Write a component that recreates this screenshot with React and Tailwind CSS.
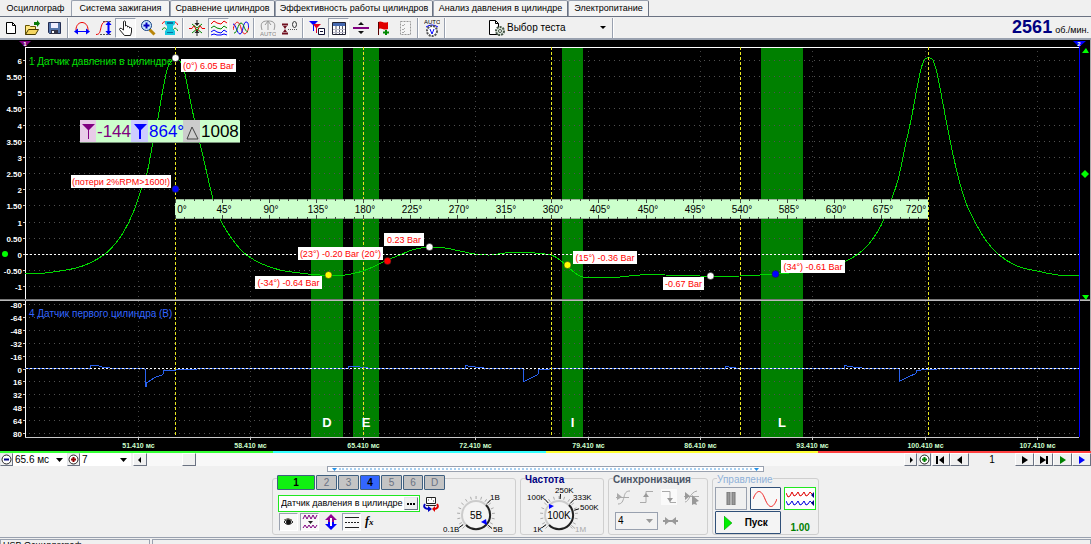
import React from 'react';
import clsx from 'clsx';

const tabs = [
  { label: 'Осциллограф', width: 'w-[71px]' },
  { label: 'Система зажигания', width: 'w-[99px]' },
  { label: 'Сравнение цилиндров', width: 'w-[105px]' },
  { label: 'Эффективность работы цилиндров', width: 'w-[158px]' },
  { label: 'Анализ давления в цилиндре', width: 'w-[135px]' },
  { label: 'Электропитание', width: 'w-[81px]' },
];

const pressure = [
  [25, 274], [45, 273], [60, 271], [76, 268], [90, 263], [105, 254], [115, 244], [123, 233], [133, 213],
  [140, 193], [147, 173], [153, 142], [158, 118], [163, 89], [167, 70], [171, 61], [175, 58], [180, 61],
  [184, 70], [188, 89], [194, 118], [202, 152], [213, 199], [220, 219], [230, 236], [240, 249], [248, 256],
  [262, 264], [280, 270], [300, 273], [320, 275], [345, 275], [355, 273], [363, 271], [375, 266], [387, 260],
  [400, 255], [412, 250], [429, 247], [445, 248], [460, 251], [475, 254], [490, 255], [505, 253], [520, 252],
  [535, 253], [551, 255], [560, 260], [567, 266], [575, 273], [583, 277], [600, 278], [620, 277], [640, 275],
  [665, 275], [700, 276], [740, 276], [775, 274], [800, 272], [825, 268], [846, 261], [858, 254], [868, 245],
  [878, 231], [884, 219], [890, 203], [898, 180], [905, 147], [911, 120], [917, 88], [921, 69], [925, 59],
  [932, 59], [936, 69], [940, 88], [946, 120], [952, 150], [959, 180], [966, 203], [975, 222], [985, 239],
  [998, 254], [1017, 266], [1037, 271], [1058, 275], [1079, 276],
];

const firstCylinder =
  '25,368 90,368 91,365 97,365 104,367 116,368 145,368 146,386 147,382 155,377 163,374 164,370 172,370 180,369 215,368 348,368 348,366 356,366 364,367 372,368 465,368 465,365 478,367 490,368 523,368 524,381 532,377 538,374 539,369 560,368 725,368 725,366 740,368 844,368 844,365 856,367 868,368 899,368 899,381 907,377 916,373 917,370 925,369 950,368 1079,368';

const upperTicks = ['6', '5.50', '5', '4.50', '4', '3.50', '3', '2.50', '2', '1.50', '1', '0.50', '0', '-0.50', '-1'];
const lowerTicks = ['-80', '-64', '-48', '-32', '-16', '0', '16', '32', '48', '64', '80'];
const times = [51, 58, 65, 72, 79, 86, 93, 100, 107];

const bands = [
  { x: 311, w: 32, name: 'D' },
  { x: 353, w: 26, name: 'E' },
  { x: 562, w: 21, name: 'I' },
  { x: 761, w: 42, name: 'L' },
];

const markers = [
  { x: 181, y: 59, w: 55, text: '(0°) 6.05 Bar', cx: 175, cy: 58, fill: '#fff' },
  { x: 71, y: 175, w: 100, text: '(потери 2%RPM>1600!)', cx: 175, cy: 189, fill: '#00f' },
  { x: 255, y: 276, w: 67, text: '(-34°) -0.64 Bar', cx: 328, cy: 275, fill: '#ff0' },
  { x: 298, y: 247, w: 85, text: '(23°) -0.20 Bar (20°)', cx: 387, cy: 261, fill: '#f00' },
  { x: 384, y: 233, w: 40, text: '0.23 Bar', cx: 429, cy: 247, fill: '#fff' },
  { x: 573, y: 251, w: 64, text: '(15°) -0.36 Bar', cx: 567, cy: 265, fill: '#ff0' },
  { x: 663, y: 277, w: 41, text: '-0.67 Bar', cx: 710, cy: 276, fill: '#fff' },
  { x: 781, y: 260, w: 64, text: '(34°) -0.61 Bar', cx: 775, cy: 274, fill: '#00f' },
];

// Catmull-Rom spline through the samples
function smooth(pts) {
  let d = `M${pts[0][0]},${pts[0][1]}`;
  for (let i = 0; i < pts.length - 1; i++) {
    const a = pts[i - 1] || pts[i];
    const b = pts[i];
    const c = pts[i + 1];
    const e = pts[i + 2] || c;
    d += `C${b[0] + (c[0] - a[0]) / 6},${b[1] + (c[1] - a[1]) / 6} ${c[0] - (e[0] - b[0]) / 6},${c[1] - (e[1] - b[1]) / 6} ${c[0]},${c[1]}`;
  }
  return d;
}

function Icon({ children, w = 16, h = 16, className }) {
  return (
    <svg width={w} height={h} viewBox={`0 0 ${w} ${h}`} fill="none" className={clsx('shrink-0', className)} aria-hidden="true">
      {children}
    </svg>
  );
}

function Tool({ label, pressed, children }) {
  return (
    <button
      type="button"
      aria-label={label}
      className={clsx(
        'flex h-[20px] w-[21px] items-center justify-center',
        pressed && 'border border-t-gray-400 border-l-gray-400 border-r-white border-b-white bg-[#f8f8f8]'
      )}
    >
      <Icon>{children}</Icon>
    </button>
  );
}

function Separator() {
  return <div className="mx-[2px] h-[20px] w-[2px] border-l border-gray-400 bg-white" />;
}

function Tabs() {
  return (
    <div role="tablist" className="flex h-[17px] shrink-0 border-b border-gray-500">
      {tabs.map((tab, i) => (
        <button
          key={tab.label}
          type="button"
          role="tab"
          aria-selected={i === 0}
          className={clsx(
            'h-[16px] shrink-0 text-center text-[9px] leading-[15px] whitespace-nowrap',
            tab.width,
            i > 0 && 'rounded-t-[2px] border border-b-0 border-gray-400 border-r-gray-500 bg-[#f4f4f4]'
          )}
        >
          {tab.label}
        </button>
      ))}
    </div>
  );
}

function Toolbar() {
  return (
    <div className="flex h-[23px] shrink-0 items-center border-b-2 border-gray-400">
      <div className="flex gap-px">
        <Tool label="Новый">
          <path d="M3.500 2.500h6l3 3v8h-9z" fill="#fff" stroke="#000" />
          <path d="M9.500 2.500v3h3" stroke="#000" />
        </Tool>
        <Tool label="Открыть">
          <path d="M.5 14.500v-9h4l1 1h5v3" fill="#ffe680" stroke="#665500" />
          <path d="M.5 14.500l3-5h10l-3 5z" fill="#f5d660" stroke="#443800" />
          <path d="M9 5V2h3V0l3 3.500L12 7V5z" fill="#087a08" />
        </Tool>
        <Tool label="Сохранить">
          <path d="M1.500 2.500h12v11h-11l-1-1z" fill="#5575aa" stroke="#222c50" />
          <path d="M4 3h7v5H4z" fill="#eef" />
          <path d="M4 10h7v4H4z" fill="#334" />
          <path d="M5 11h2v2H5z" fill="#fff" />
        </Tool>
      </div>
      <Separator />
      <div className="flex gap-px">
        <Tool label="Период">
          <path d="M2 10C2 0 14 0 14 10" stroke="#e00" />
          <path d="M2 11.500h12" stroke="#00f" />
          <path d="M0 11.500l4-3v6zM16 11.500l-4-3v6z" fill="#00f" />
        </Tool>
        <Tool label="Амплитуда">
          <path d="M0 14.500c4 0 4-3 5-7s2-6 6-6h1" stroke="#e00" />
          <path d="M7 1.500h9M4 14.500h12" stroke="#555" strokeDasharray="2 1" />
          <path d="M12.500 3v10" stroke="#00f" strokeWidth="2" />
          <path d="M12.500 1l3 4h-6zM12.500 15l3-4h-6z" fill="#00f" />
        </Tool>
        <Tool label="Перемещение" pressed>
          <path
            d="M5.500 10V1.500q1-1 2 0V6q1-1 2 0v1q1-1 2 0v1q1-1 2 0v4l-1 3.500h-6L1.500 9.500q0-2 2-1z"
            fill="#fff"
            stroke="#222"
          />
        </Tool>
        <Tool label="Масштаб">
          <path d="M9.500 9.500l5 5" stroke="#b8860b" strokeWidth="3" />
          <circle cx="6.500" cy="5.500" r="5" fill="#cceaff" stroke="#123c80" />
          <path d="M3.500 5.500h6M6.500 2.500v6" stroke="#0000c0" strokeWidth="2" />
        </Tool>
        <Tool label="Фильтр">
          <path d="M0 4c2-3 3-3 5 0s4 3 6 0 3-2 5 1" stroke="#e00" />
          <path d="M0 10c2-3 3-3 5 0s4 3 6 0 3-2 5 1" stroke="#080" />
          <path d="M3 1h10v3l-2 2v3l2 2v4H3v-4l2-2V6L3 4z" fill="#18c8e0" />
          <path d="M5 2h6v2H5zM5 12h6v1H5z" fill="#0870a0" />
        </Tool>
      </div>
      <Separator />
      <div className="flex gap-px">
        <Tool label="Центрировать">
          <path d="M0 8.500h3l2-3 3 6 3-6 2 3h3" stroke="#e00" />
          <path d="M3 4l5 4 5-4M3 13l5-4 5 4" stroke="#080" />
          <path d="M8 0v5M8 11v5" stroke="#222" />
          <path d="M8 6L5.500 3h5zM8 10l-2.500 3h5z" fill="#222" />
        </Tool>
        <Tool label="Разделить сигналы" pressed>
          <path d="M0 4l3-3 3 2 4 1 3-3 3 2" stroke="#e00" />
          <path d="M0 8l3-2 3 2 4 1 3-3 3 2" stroke="#080" />
          <path d="M0 12l3-2 3 2 4 1 3-3 3 2M0 15l3-1 3 1h4l3-1 3 1" stroke="#00f" />
        </Tool>
        <Tool label="Наложить сигналы">
          <path d="M0 10C2 0 6 0 8 8s6 8 8-2" stroke="#e00" />
          <path d="M0 4c3 0 4 10 7 10s3-12 6-12 2 4 3 6" stroke="#00f" />
          <path d="M1 13C4 14 5 3 8 3s3 8 7 9" stroke="#080" />
        </Tool>
      </div>
      <Separator />
      <div className="flex gap-px">
        <Tool label="Авто">
          <path d="M2 10C-1 1 5 1 8 1s9 0 6 9M8 1v9M5 5l3-4 3 4" stroke="#999" />
          <text x="0" y="16" fontSize="6" fill="#888">AUTO</text>
        </Tool>
        <Tool label="Установить ноль">
          <path d="M0 4.500h6M0 13.500h6" stroke="#701020" strokeWidth="2" />
          <path d="M1 6h4L3 9zM1 12h4l-2-3z" fill="#701020" />
          <path d="M6 9.500h10" stroke="#555" strokeDasharray="1 1" />
          <ellipse cx="12.500" cy="4.500" rx="2" ry="3" stroke="#333" />
        </Tool>
      </div>
      <Separator />
      <div className="flex gap-px">
        <Tool label="Маркеры">
          <path d="M0 1h9L5 5v6H4V5z" fill="#00f" />
          <path d="M4 4h8L8 8v5H7V8z" fill="#e00020" />
          <path d="M9.500 8.500h6v6h-6zM11 11.500h3" fill="#fff" stroke="#113" />
        </Tool>
        <Tool label="Таблица" pressed>
          <path d="M1.500 2.500h13v12h-13z" fill="#fff" stroke="#223" />
          <path d="M2 3h12v3H2z" fill="#4568b0" />
          <path d="M5 6v8M8.500 6v8M11.500 6v8" stroke="#556" />
          <path d="M2 9.500h12M2 12.500h12" stroke="#bbc" />
        </Tool>
        <Tool label="Линейка">
          <path d="M0 8h16" stroke="#800080" strokeWidth="2" />
          <path d="M5 5h6L8 2zM5 11h6l-3 3z" fill="#111" />
        </Tool>
        <Tool label="Добавить метку">
          <path d="M3 2c4-2 5 2 10 0v7c-5 2-6-2-10 0z" fill="#e00000" />
          <path d="M3.500 2v13" stroke="#500" />
          <path d="M8 12.500h6M11 10v5" stroke="#080" strokeWidth="2" />
        </Tool>
        <Tool label="Отчёт">
          <path d="M3.500 1.500h10v13h-10z" fill="#f5f5f5" stroke="#999" strokeDasharray="2 1" />
          <path d="M5 5l1 1 2-2M5 9l1 1 2-2M5 12l1 1 2-2" stroke="#aaa" />
        </Tool>
      </div>
      <Separator />
      <button type="button" aria-label="Автоизмерение" className="flex w-[21px] justify-center">
        <Icon h={20}>
          <text x="0" y="6" fontSize="6" fill="#000">AUTO</text>
          <path d="M2 9Q8 5 14 9" stroke="#00f" />
          <circle cx="8" cy="13" r="5" fill="#fff" stroke="#555" strokeDasharray="2 1" strokeWidth="2" />
          <path d="M6 11l2 5 2-5" stroke="#00f" />
        </Icon>
      </button>
      <Separator />
      <button type="button" className="ml-[40px] flex h-[20px] w-[122px] items-center text-[10px]">
        <Icon w={18} h={18} className="mr-px">
          <path d="M1.500 1.500h6l3 3v11h-9z" fill="#fff" stroke="#000" />
          <path d="M7.500 1.500v3h3" stroke="#000" />
          <circle cx="12" cy="12" r="4" fill="#dce8dc" stroke="#455545" strokeWidth="2" strokeDasharray="2 1" />
          <circle cx="12" cy="12" r="1.500" fill="#fff" stroke="#455545" />
        </Icon>
        <span>Выбор теста</span>
        <Icon w={6} h={4} className="mr-[4px] ml-auto">
          <path d="M0 0h6L3 3z" fill="#000" />
        </Icon>
      </button>
      <Separator />
      <div className="mr-[2px] ml-auto flex items-baseline gap-[3px]">
        <span className="text-[18px] leading-[20px] font-bold text-[#000080]">2561</span>
        <span className="text-[9px]">об./мин.</span>
      </div>
    </div>
  );
}

function Scope() {
  const vx = times.map((_, i) => Math.round(138 + i * 112.4) + 0.5);
  const uy = upperTicks.map((_, i) => Math.round(60 + i * 16.15) + 0.5);
  const ly = lowerTicks.map((_, i) => Math.round(304 + i * 12.9) + 0.5);
  return (
    <svg viewBox="0 40 1091 413" className="block h-auto w-full shrink-0 bg-black" role="img" aria-label="Осциллограмма">
      {bands.map((b) => (
        <rect key={b.name} x={b.x} y="47" width={b.w} height="390" fill="#008000" />
      ))}

      <g stroke="#505050" strokeDasharray="1 4">
        {[...uy, ...ly].map((y) => (
          <path key={y} d={`M29 ${y}H1079`} />
        ))}
        {vx.map((x) => (
          <path key={x} d={`M${x} 51V437`} stroke="#444" />
        ))}
      </g>

      <g fill="#fff" fontSize="8" fontWeight="bold" textAnchor="end">
        {upperTicks.map((t, i) => (
          <text key={t} x="22" y={uy[i] + 3}>{t}</text>
        ))}
        {lowerTicks.map((t, i) => (
          <text key={t} x="22" y={ly[i] + 3}>{t}</text>
        ))}
      </g>
      <g stroke="#ccc">
        {[...uy, ...ly].map((y) => (
          <path key={y} d={`M23 ${y}h3`} />
        ))}
        <path d="M25.500 47V437" stroke="#fff" />
        {vx.map((x) => (
          <path key={x} d={`M${x} 437v3`} />
        ))}
      </g>
      <path d="M25 47.500H1079" stroke="#fff" />
      <path d="M25 437.500H1079" stroke="#ccc" />
      <g fill="#ccffcc" fontSize="7" fontWeight="bold" textAnchor="middle">
        {times.map((t, i) => (
          <text key={t} x={vx[i]} y="448">{`${t}.410 мс`}</text>
        ))}
      </g>

      <g fontSize="10">
        <text x="29" y="65" fill="#00e000">1 Датчик давления в цилиндре</text>
        <text x="29" y="317" fill="#3366ff">4 Датчик первого цилиндра (В)</text>
      </g>

      <g fill="none" shapeRendering="crispEdges">
        <path d={smooth(pressure)} stroke="#00d800" />
        <polyline points={firstCylinder} stroke="#2a62ee" transform="translate(0 .5)" />
      </g>
      <path d="M26 254.500H1079M26 368.500H1079" stroke="#fff" strokeDasharray="2 2" />

      <path d="M0 299.500H1091" stroke="#777" />
      <path d="M0 300.500H1091" stroke="#bbb" />

      {[175, 363, 551, 740, 928].map((x) => (
        <path key={x} d={`M${x + 0.5} 47V437`} stroke="#e8e820" strokeDasharray="3 2" />
      ))}
      <g fill="#fff" fontSize="13" fontWeight="bold" textAnchor="middle">
        {bands.map((b) => (
          <text key={b.name} x={b.x + b.w / 2} y="427">{b.name}</text>
        ))}
      </g>

      <rect x="175" y="199" width="753" height="20" fill="#ccffcc" />
      <path d="M175 199.500h753M175 218.500h753" stroke="#98b898" />
      <g stroke="#404840">
        {Array.from({ length: 80 }, (_, i) => {
          const x = Math.round(175 + i * 9.41) + 0.5;
          const len = i % 5 === 0 ? 4 : 2;
          return <path key={i} d={`M${x} 199v${len}M${x} 219v-${len}`} />;
        })}
      </g>
      <g fill="#000" fontSize="10" textAnchor="middle">
        <text x="182" y="213">0°</text>
        {Array.from({ length: 15 }, (_, i) => (
          <text key={i} x={Math.round(177 + (i + 1) * 47.05)} y="213">{`${(i + 1) * 45}°`}</text>
        ))}
        <text x="916" y="213">720°</text>
      </g>

      {markers.map((m) => (
        <g key={m.text}>
          <rect x={m.x} y={m.y} width={m.w} height="13" fill="#fff" />
          <text x={m.x + m.w / 2} y={m.y + 10} fontSize="9" fill="#ff0000" textAnchor="middle">{m.text}</text>
          <circle cx={m.cx + 0.5} cy={m.cy} r="3.500" fill={m.fill} stroke="#222" strokeWidth=".5" />
        </g>
      ))}

      <g>
        <rect x="80" y="120" width="160" height="23" rx="1" fill="#ccffcc" />
        <rect x="80" y="120" width="16" height="22" fill="#e8cce8" />
        <rect x="131" y="120" width="17" height="22" fill="#ccccff" />
        <rect x="183" y="120" width="17" height="22" fill="#cccccc" />
        <path d="M82 124h13l-6 6v9h-1v-9z" fill="#800080" />
        <path d="M134 124h13l-6 6v9h-2v-9z" fill="#0000ff" />
        <path d="M192 127l-5 12h11z" fill="none" stroke="#444" />
        <g fontSize="17">
          <text x="97" y="137" fill="#800080">-144</text>
          <text x="149" y="137" fill="#0000ff">864°</text>
          <text x="201" y="137" fill="#000">1008</text>
        </g>
        <path d="M80 142.500h160" stroke="#789078" />
      </g>

      <path d="M19 41h12l-6 6z" fill="#800080" />
      <text x="25" y="46" fontSize="6" fontWeight="bold" fill="#fff" textAnchor="middle">1</text>
      <path d="M1079.500 46V437" stroke="#0000ff" />
      <path d="M1073 41h13l-7 6z" fill="#0000ff" />
      <text x="1079" y="46" fontSize="6" fontWeight="bold" fill="#fff" textAnchor="middle">2</text>
      <path d="M1082 53h7l-3-5zM1082 295h7l-3 5zM1085 170l4 4-4 4-4-4z" fill="#00ff00" />
      <circle cx="5" cy="254" r="3" fill="#00ff00" />
      <path d="M1090.500 40V453" stroke="#aaa" />
    </svg>
  );
}

function CycleStrip() {
  return (
    <div className="-mt-[2px] flex h-[2px] shrink-0">
      <div className="w-1/4 bg-[#33ff33]" />
      <div className="w-1/4 bg-[#33ffff]" />
      <div className="w-1/4 bg-[#ffff33]" />
      <div className="w-1/4 bg-[#ff4040]" />
    </div>
  );
}

function NavButton({ label, className, children }) {
  return (
    <button
      type="button"
      aria-label={label}
      className={clsx(
        'flex h-[13px] shrink-0 items-center justify-center border border-t-white border-l-white border-r-gray-500 border-b-gray-500 bg-[#f0f0f0]',
        className
      )}
    >
      <svg width="10" height="8" viewBox="0 0 10 8" aria-hidden="true">{children}</svg>
    </button>
  );
}

function ZoomButton({ label, color, plus }) {
  return (
    <button type="button" aria-label={label} className="flex h-[13px] w-[13px] shrink-0 items-center justify-center border border-gray-200 border-r-gray-500 border-b-gray-500">
      <Icon w={11} h={11}>
        <circle cx="5.500" cy="5.500" r="4.500" fill="#fff" stroke="#222" />
        <path d={plus ? 'M3 5.500h5M5.500 3v5' : 'M3 5.500h5'} stroke={color} strokeWidth="2" />
      </Icon>
    </button>
  );
}

function MiniSelect({ label, value, className, disabled }) {
  return (
    <div className={clsx('relative flex shrink-0 items-center', className)}>
      <select
        aria-label={label}
        disabled={disabled}
        defaultValue={value}
        className="h-full w-full appearance-none bg-transparent pl-[2px] text-[10px] leading-[12px] text-black"
      >
        <option>{value}</option>
      </select>
      <svg width="7" height="4" viewBox="0 0 7 4" className="pointer-events-none absolute right-[4px]" aria-hidden="true">
        <path d="M0 0h7L3.500 4z" fill={disabled ? '#999' : '#000'} />
      </svg>
    </div>
  );
}

function Navigator() {
  return (
    <div className="flex h-[13px] shrink-0 bg-[#f0f0f0]">
      <ZoomButton label="Уменьшить время" color="#000080" />
      <MiniSelect label="Развёртка" value="65.6 мс" className="w-[54px] bg-white" />
      <ZoomButton label="Увеличить" color="#900000" plus />
      <MiniSelect label="Масштаб" value="7" className="mr-[2px] w-[51px] bg-white" />
      <NavButton label="Влево" className="w-[14px]">
        <path d="M6 1v6L3 4z" />
      </NavButton>
      <div className="flex grow bg-[#f8f8f8] pl-[35px]">
        <div className="h-[13px] w-[14px] border border-t-white border-l-white border-r-gray-500 border-b-gray-500 bg-[#f0f0f0]" />
      </div>
      <NavButton label="Вправо" className="w-[13px]">
        <path d="M4 1v6l3-3z" />
      </NavButton>
      <div className="mx-px">
        <ZoomButton label="Добавить" color="#008000" plus />
      </div>
      <NavButton label="В начало" className="w-[18px]">
        <path d="M0 0h2v8H0zM8 0v8L3 4z" />
      </NavButton>
      <NavButton label="Назад" className="w-[19px]">
        <path d="M7 0v8L2 4z" />
      </NavButton>
      <span className="w-[46px] text-center text-[10px] leading-[13px]">1</span>
      <NavButton label="Вперёд" className="w-[19px]">
        <path d="M2 0v8l6-4z" />
      </NavButton>
      <NavButton label="В конец" className="w-[19px]">
        <path d="M7 0h2v8H7zM1 0v8l6-4z" />
      </NavButton>
      <NavButton label="Воспроизвести" className="w-[19px]">
        <path d="M2 0v8l6-4z" fill="#008000" />
      </NavButton>
      <NavButton label="Продолжить" className="w-[19px]">
        <path d="M2 0v8l6-4z" fill="#0000ff" />
      </NavButton>
    </div>
  );
}

function Splitter() {
  return (
    <div className="mx-auto flex h-[6px] w-2/5 shrink-0 items-center justify-between border border-gray-400 bg-white px-[4px]">
      <Icon w={5} h={3}><path d="M0 0h5L2.500 3z" fill="#2090e8" /></Icon>
      <div className="mx-[2px] grow border-t-2 border-dotted border-[#a8d0f0]" />
      <Icon w={5} h={3}><path d="M0 0h5L2.500 3z" fill="#2090e8" /></Icon>
    </div>
  );
}

function Knob({ cx, cy, value, labels, pointer }) {
  const ticks = Array.from({ length: 17 }, (_, i) => (135 + i * 16.9) * (Math.PI / 180));
  return (
    <g>
      <circle cx={cx} cy={cy} r="14" fill="#f4f4f4" stroke="#ccc" strokeWidth="2" />
      <path
        d={`M${cx + 10} ${cy - 10}A14 14 0 0 1 ${cx - 10} ${cy + 10}`}
        fill="none"
        stroke="#222"
        strokeWidth="2"
      />
      {ticks.map((a) => (
        <path
          key={a}
          d={`M${cx + Math.cos(a) * 16} ${cy + Math.sin(a) * 16}L${cx + Math.cos(a) * 19} ${cy + Math.sin(a) * 19}`}
          stroke="#aaa"
        />
      ))}
      {labels.map((l) => (
        <g key={l.text}>
          <path
            d={`M${cx + Math.cos(l.angle) * 16} ${cy + Math.sin(l.angle) * 16}L${cx + Math.cos(l.angle) * 21} ${cy + Math.sin(l.angle) * 21}`}
            stroke={l.fill || '#000'}
          />
          <text x={l.x} y={l.y} fontSize="8" fill={l.fill || '#000'}>{l.text}</text>
        </g>
      ))}
      <path d={pointer} fill="#0000ff" />
      <text x={cx} y={cy + 4} fontSize="10" textAnchor="middle">{value}</text>
    </g>
  );
}

const channels = [
  { n: '1', cls: 'w-[38px] bg-[#10f010] font-bold text-black' },
  { n: '2', cls: 'w-[21px] bg-[#c4c4c4] text-gray-500' },
  { n: '3', cls: 'w-[21px] bg-[#c4c4c4] text-gray-500' },
  { n: '4', cls: 'w-[20px] bg-[#3366ff] font-bold text-black' },
  { n: '5', cls: 'w-[21px] bg-[#c4c4c4] text-gray-500' },
  { n: '6', cls: 'w-[20px] bg-[#c4c4c4] text-gray-500' },
  { n: 'D', cls: 'w-[21px] bg-[#c4c4c4] text-gray-500' },
];

function ChannelGroup() {
  return (
    <section aria-label="Канал" className="flex h-[57px] w-[244px] shrink-0 rounded-[3px] border border-[#cfcfcf]">
      <div className="-mt-[4px] flex w-[170px] flex-col pl-[4px]">
        <div className="flex h-[15px] gap-px bg-[#f0f0f0]">
          {channels.map((c) => (
            <button key={c.n} type="button" className={clsx('shrink-0 rounded-[1px] border border-[#406080] text-[10px] leading-[13px]', c.cls)}>
              {c.n}
            </button>
          ))}
        </div>
        <div className="mt-[5px] flex items-center">
          <div className="ml-px flex h-[17px] w-[142px] shrink-0 items-center border border-[#20e820] bg-white">
            <input aria-label="Датчик" defaultValue="Датчик давления в цилиндре" className="w-[125px] bg-transparent pl-[2px] text-[9px] outline-none" />
            <button type="button" aria-label="Выбрать датчик" className="flex h-[13px] w-[14px] items-center justify-center border border-gray-200 border-r-gray-500 border-b-gray-500 bg-[#f0f0f0]">
              <Icon w={8} h={2}><path d="M0 1h2M3 1h2M6 1h2" stroke="#000" strokeWidth="2" /></Icon>
            </button>
          </div>
          <button type="button" aria-label="Поменять" className="ml-[3px]">
            <Icon>
              <path d="M3.500 1.500h9v6h-9zM3 9.500h10" fill="#fff" stroke="#222" />
              <path d="M5 4h1M8 3h1M10 5h1" stroke="#444" />
              <path d="M2 8c-2 3 0 5 4 5" stroke="#0000c0" strokeWidth="2" />
              <path d="M5 10l4 3-4 3z" fill="#0000c0" />
              <path d="M14 8c2 3 0 5-3 5" stroke="#e00000" strokeWidth="2" />
              <path d="M12 10l-3 3 3 3z" fill="#e00000" />
            </Icon>
          </button>
        </div>
        <div className="mt-px flex h-[18px] gap-[2px] pl-[2px]">
          <button type="button" aria-label="Показать" className="flex w-[19px] items-center justify-center border border-gray-400 border-r-white border-b-white bg-[#f8f8f8]">
            <Icon w={11} h={8}>
              <path d="M1 4q4-5 9 0-5 5-9 0z" fill="#fff" stroke="#222" />
              <circle cx="5.500" cy="4" r="2.500" fill="#111" />
              <path d="M1 2q4-3 8 0" stroke="#665" />
            </Icon>
          </button>
          <button type="button" aria-label="Сглаживание" className="flex w-[19px] items-center justify-center border border-gray-400 border-r-white border-b-white bg-[#f8f8f8]">
            <Icon>
              <path d="M1 5l2-4 2 4 2-4 2 4 2-4 2 4 2-4M1 14l2-3 2 3 2-3 2 3 2-3 2 3 2-3" stroke="#800080" />
              <path d="M6 7h5L8.500 10z" fill="#222" />
            </Icon>
          </button>
          <button type="button" aria-label="Инвертировать" className="flex w-[19px] items-center justify-center">
            <Icon w={12}>
              <path d="M6 0l6 6H9v2H3V6H0z" fill="#900090" />
              <path d="M6 16l6-6H9V8H3v2H0z" fill="#0000ff" />
              <path d="M5 4h2v8H5z" fill="#fff" />
            </Icon>
          </button>
          <button type="button" aria-label="Уровни" className="flex w-[19px] items-center justify-center border border-gray-400 border-r-white border-b-white bg-[#f8f8f8]">
            <Icon w={14}>
              <path d="M0 3.500h14M0 13.500h14" stroke="#222" />
              <path d="M0 8.500h14" stroke="#222" strokeDasharray="2 1" />
            </Icon>
          </button>
          <button type="button" className="w-[19px] pl-[2px] text-left font-['Liberation_Serif',serif] text-[12px] leading-[15px] font-bold italic">
            f<span className="text-[9px]">x</span>
          </button>
        </div>
      </div>
      <svg width="70" height="55" viewBox="443 479 70 55" className="shrink-0" aria-label="Диапазон 5В">
        <Knob
          cx={476}
          cy={515}
          value="5В"
          pointer="M486 519l1 6-6-3z"
          labels={[
            { text: '0.1В', x: 443, y: 532, angle: 2.5 },
            { text: '1В', x: 490, y: 500, angle: -0.8 },
            { text: '5В', x: 493, y: 532, angle: 0.7 },
          ]}
        />
      </svg>
    </section>
  );
}

function Box({ title, titleClass, className, children }) {
  return (
    <section className={clsx('h-[57px] shrink-0 rounded-[3px] border border-[#cfcfcf]', className)}>
      <h2 className={clsx('-mt-[5px] ml-[4px] w-max bg-[#f0f0f0] text-[10px] leading-[12px]', titleClass)}>{title}</h2>
      {children}
    </section>
  );
}

function SyncButton({ label, children }) {
  return (
    <button type="button" aria-label={label} disabled>
      <Icon>{children}</Icon>
    </button>
  );
}

function ControlPanel() {
  return (
    <div className="flex shrink-0 justify-center gap-[4px] pt-[6px]">
      <ChannelGroup />
      <Box title="Частота" titleClass="font-bold text-[#000080]" className="w-[84px]">
        <svg width="82" height="48" viewBox="521 486 82 48" aria-label="Частота 100K">
          <Knob
            cx={559}
            cy={515}
            value="100K"
            pointer="M549 504l5 2-5 3z"
            labels={[
              { text: '1K', x: 533, y: 532, angle: 2.5 },
              { text: '100K', x: 527, y: 500, angle: -2.3 },
              { text: '250K', x: 555, y: 493, angle: -1.5 },
              { text: '333K', x: 573, y: 500, angle: -0.8 },
              { text: '500K', x: 580, y: 510, angle: -0.3 },
              { text: '1M', x: 575, y: 532, angle: 0.7, fill: '#aaa' },
            ]}
          />
        </svg>
      </Box>
      <Box title="Синхронизация" titleClass="font-bold text-gray-600" className="w-[100px]">
        <div className="mt-[3px] flex justify-between px-[7px]">
          <SyncButton label="Фронт">
            <path d="M2 15c4 0 5-3 6-7s2-6 6-6M0 8.500h13" stroke="#aaa" />
            <path d="M1 4l5 4-5 3z" fill="#aaa" />
          </SyncButton>
          <SyncButton label="По нарастанию">
            <path d="M1 13.500h6v-11h7" stroke="#aaa" />
            <path d="M4 8l3-4 3 4z" fill="#999" />
          </SyncButton>
          <SyncButton label="По спаду">
            <path d="M0 0h16v16H0z" fill="#fafafa" />
            <path d="M1 2.500h8v11h6" stroke="#aaa" />
            <path d="M6 9l3 4 3-4z" fill="#999" />
          </SyncButton>
          <SyncButton label="Вручную">
            <path d="M1 13c4 0 5-10 12-11M0 7.500h15" stroke="#aaa" />
            <path d="M1 3l5 4-5 4zM8 6l7 6-3 1 1 3-3-1-2 1z" fill="#999" />
          </SyncButton>
        </div>
        <div className="mt-[7px] flex items-center gap-[5px] pl-[6px]">
          <MiniSelect label="Канал синхронизации" value="4" disabled className="h-[18px] w-[43px] border border-gray-400 bg-[#f2f2f2]" />
          <Icon w={15} h={10}>
            <path d="M0 5h15" stroke="#999" strokeWidth="2" />
            <path d="M2 1l5 4-5 4zM13 1L8 5l5 4z" fill="#999" />
          </Icon>
        </div>
      </Box>
      <Box title="Управление" titleClass="text-[#8fb0d8]" className="w-[107px]">
        <div className="mt-px grid grid-cols-3 gap-x-[3px] gap-y-px px-[2px]">
          <button type="button" aria-label="Пауза" className="flex h-[23px] items-center justify-center border border-gray-400">
            <Icon w={10} h={13}>
              <path d="M1 0h3v13H1zM6 0h3v13H6z" fill="#999" stroke="#777" />
            </Icon>
          </button>
          <button type="button" aria-label="Сигнал" className="flex h-[23px] items-center justify-center rounded-[1px] border border-[#305078] bg-[#f8f8f8]">
            <Icon w={24} h={16}>
              <path d="M0 8C4-2 8-2 12 8s8 10 12 0" stroke="#f02020" />
            </Icon>
          </button>
          <button type="button" aria-label="Запись" className="flex h-[23px] items-center justify-center border border-[#20e820] bg-white">
            <Icon w={28}>
              <path d="M0 2l2 4 2-1 2-4 2 4 2-1 2-3 2 4 2-1 2-3 2 4 2-1 2-3 2 2" stroke="#e00000" />
              <path d="M0 10l2 4 2-1 2-3 2 4 2-1 2-3 2 4 2-1 2-3 2 4 2-1 2-3 2 2" stroke="#0000e0" />
              <path d="M28 1v6l-3-3zM28 9v6l-3-3z" fill="#000080" />
            </Icon>
          </button>
          <button type="button" className="col-span-2 flex h-[23px] items-center rounded-[1px] border border-[#305078] bg-[#f4f4f4] pl-[8px] text-[10px] font-bold">
            <Icon w={8} h={14}>
              <path d="M0 0v14l8-7z" fill="#00ee00" stroke="#078007" strokeWidth=".5" />
            </Icon>
            <span className="grow text-center">Пуск</span>
          </button>
          <output className="self-end text-center text-[10px] leading-[12px] font-bold text-[#008000]">1.00</output>
        </div>
      </Box>
    </div>
  );
}

function StatusBar() {
  return (
    <footer className="mt-[2px] flex shrink-0 gap-[2px] border-t border-gray-400 pt-px text-[9px] leading-[11px]">
      <div className="h-[16px] w-[150px] border border-gray-400 border-b-white pl-[2px]">USB Осциллограф</div>
      <div className="h-[16px] grow border border-gray-400 border-b-white" />
    </footer>
  );
}

export default function App() {
  return (
    <div className="flex h-screen flex-col overflow-hidden bg-[#f0f0f0] font-['Liberation_Sans',Arial,sans-serif] text-black">
      <Tabs />
      <Toolbar />
      <Scope />
      <CycleStrip />
      <Navigator />
      <Splitter />
      <ControlPanel />
      <StatusBar />
    </div>
  );
}
